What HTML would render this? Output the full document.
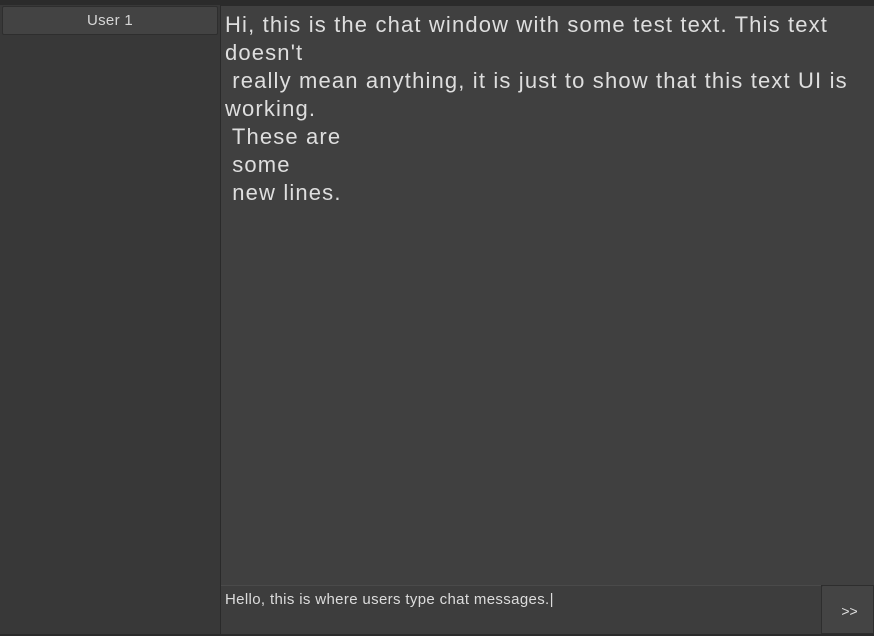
<!DOCTYPE html>
<html><head><meta charset="utf-8"><style>
html,body{margin:0;padding:0;width:874px;height:634px;overflow:hidden;background:#2b2b2b;font-family:"Liberation Sans","DejaVu Sans",sans-serif}
#left{position:absolute;left:0;top:5px;width:220px;height:629px;background:#383838}
#user{position:absolute;left:2px;top:6px;width:216px;height:29px;background:#434343;border:1px solid #2e2e2e;border-radius:2px;box-sizing:border-box;color:#d6d6d6;font-size:15px;text-align:center;line-height:28px;letter-spacing:0.3px}
#sep{position:absolute;left:220px;top:5px;width:1px;height:629px;background:#2a2a2a}
#chat{position:absolute;left:221px;top:6px;width:653px;height:579px;background:#404040}
#txt{position:absolute;left:225px;top:11px;color:#dedede;font-size:22px;line-height:28px;white-space:pre;letter-spacing:1.15px}
#input{position:absolute;left:221px;top:585px;width:600px;height:49px;background:#3d3d3d;border-top:1px solid #4a4a4a;box-sizing:border-box}
#intxt{position:absolute;left:225px;top:590px;color:#dcdcdc;font-size:15px;line-height:20px;white-space:pre;letter-spacing:0.35px}
#btn{position:absolute;left:821px;top:585px;width:53px;height:49px;background:#444;border:1px solid #2e2e2e;border-radius:2px 0 0 0;box-sizing:border-box;color:#e0e0e0;font-size:14px;text-align:center;line-height:50px;padding-left:4px}
</style></head><body>
<div id="left"></div>
<div id="user">User 1</div>
<div id="sep"></div>
<div id="chat"></div>
<div id="txt">Hi, this is the chat window with some test text. This text
doesn't
 really mean anything, it is just to show that this text UI is
working.
 These are
 some
 new lines.</div>
<div id="input"></div>
<div id="intxt">Hello, this is where users type chat messages.|</div>
<div id="btn">&gt;&gt;</div>
</body></html>
